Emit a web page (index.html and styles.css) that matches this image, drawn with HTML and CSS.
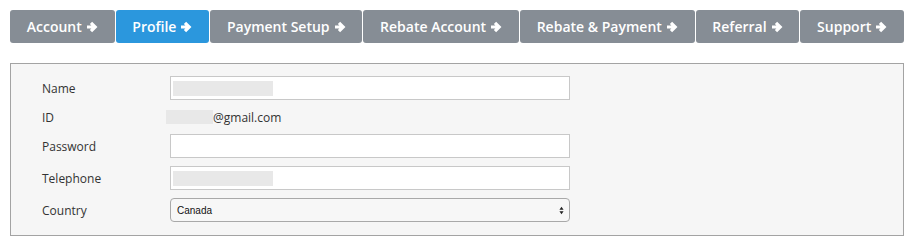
FILE: index.html
```html
<!DOCTYPE html>
<html lang="en">
<head>
    <meta charset="UTF-8">
    <title>Profile</title>
    <link rel="stylesheet" href="styles.css">
</head>
<body>
    <div class="tabs">
        <a class="tab" href="#">Account <svg class="arrow" viewBox="0 0 12 12"><path d="M1 6h8.5M5 1.8l4.2 4.2L5 10.2"/></svg></a>
        <a class="tab active" href="#">Profile <svg class="arrow" viewBox="0 0 12 12"><path d="M1 6h8.5M5 1.8l4.2 4.2L5 10.2"/></svg></a>
        <a class="tab" href="#">Payment Setup <svg class="arrow" viewBox="0 0 12 12"><path d="M1 6h8.5M5 1.8l4.2 4.2L5 10.2"/></svg></a>
        <a class="tab" href="#">Rebate Account <svg class="arrow" viewBox="0 0 12 12"><path d="M1 6h8.5M5 1.8l4.2 4.2L5 10.2"/></svg></a>
        <a class="tab" href="#">Rebate &amp; Payment <svg class="arrow" viewBox="0 0 12 12"><path d="M1 6h8.5M5 1.8l4.2 4.2L5 10.2"/></svg></a>
        <a class="tab" href="#">Referral <svg class="arrow" viewBox="0 0 12 12"><path d="M1 6h8.5M5 1.8l4.2 4.2L5 10.2"/></svg></a>
        <a class="tab" href="#">Support <svg class="arrow" viewBox="0 0 12 12"><path d="M1 6h8.5M5 1.8l4.2 4.2L5 10.2"/></svg></a>
    </div>

    <div class="panel">
        <div class="row">
            <label>Name</label>
            <div class="field"><span class="blur"></span></div>
        </div>
        <div class="row text">
            <label>ID</label>
            <div class="value"><span class="blur small"></span>@gmail.com</div>
        </div>
        <div class="row">
            <label>Password</label>
            <div class="field"></div>
        </div>
        <div class="row">
            <label>Telephone</label>
            <div class="field"><span class="blur"></span></div>
        </div>
        <div class="row">
            <label>Country</label>
            <div class="select">
                <span>Canada</span>
                <svg class="updown" viewBox="0 0 6 10"><path d="M3 0.5L5.5 4h-5zM3 9.5L0.5 6h5z"/></svg>
            </div>
        </div>
    </div>
</body>
</html>
```

FILE: styles.css
```css
body {
    margin: 0;
    padding: 10px;
    font-family: "Open Sans", Arial, sans-serif;
    color: #333;
    background: #fff;
}

.tabs {
    display: flex;
    gap: 1px;
    width: 894px;
}

.tab {
    display: flex;
    align-items: center;
    justify-content: center;
    gap: 4px;
    height: 33px;
    padding: 0 16px;
    background-color: #868d95;
    color: #fff;
    font-size: 14px;
    font-weight: 600;
    text-decoration: none;
    white-space: nowrap;
    border-radius: 3px;
    flex: 1 1 auto;
}

.tab.active {
    background-color: #2b97dd;
}

.arrow {
    width: 12px;
    height: 12px;
    fill: none;
    stroke: #fff;
    stroke-width: 3.2;
}

.panel {
    margin-top: 20px;
    width: 892px;
    padding: 12px 0 13px;
    border: 1px solid #a3a3a3;
    background-color: #f6f6f6;
}

.row {
    display: flex;
    align-items: center;
    height: 24px;
    margin-bottom: 8px;
}

.row:last-child {
    margin-bottom: 0;
}

.row.text {
    height: 18px;
}

.row label {
    width: 128px;
    padding-left: 31px;
    font-size: 12px;
}

.field {
    box-sizing: border-box;
    width: 400px;
    height: 24px;
    padding: 4px 2px;
    background: #fff;
    border: 1px solid #c8c8c8;
}

.blur {
    display: block;
    width: 100px;
    height: 15px;
    background: #e8e8e8;
}

.value {
    display: flex;
    align-items: center;
    font-size: 12px;
    margin-left: -4px;
}

.blur.small {
    width: 47px;
    height: 14px;
}

.select {
    box-sizing: border-box;
    display: flex;
    align-items: center;
    justify-content: space-between;
    width: 400px;
    height: 24px;
    padding: 0 5px 0 6px;
    border: 1px solid #a9a9a9;
    border-radius: 4px;
    background: #f7f7f7;
    font-family: Arial, "Liberation Sans", sans-serif;
    font-size: 10px;
    color: #111;
}

.updown {
    width: 5px;
    height: 9px;
    fill: #222;
}
```
